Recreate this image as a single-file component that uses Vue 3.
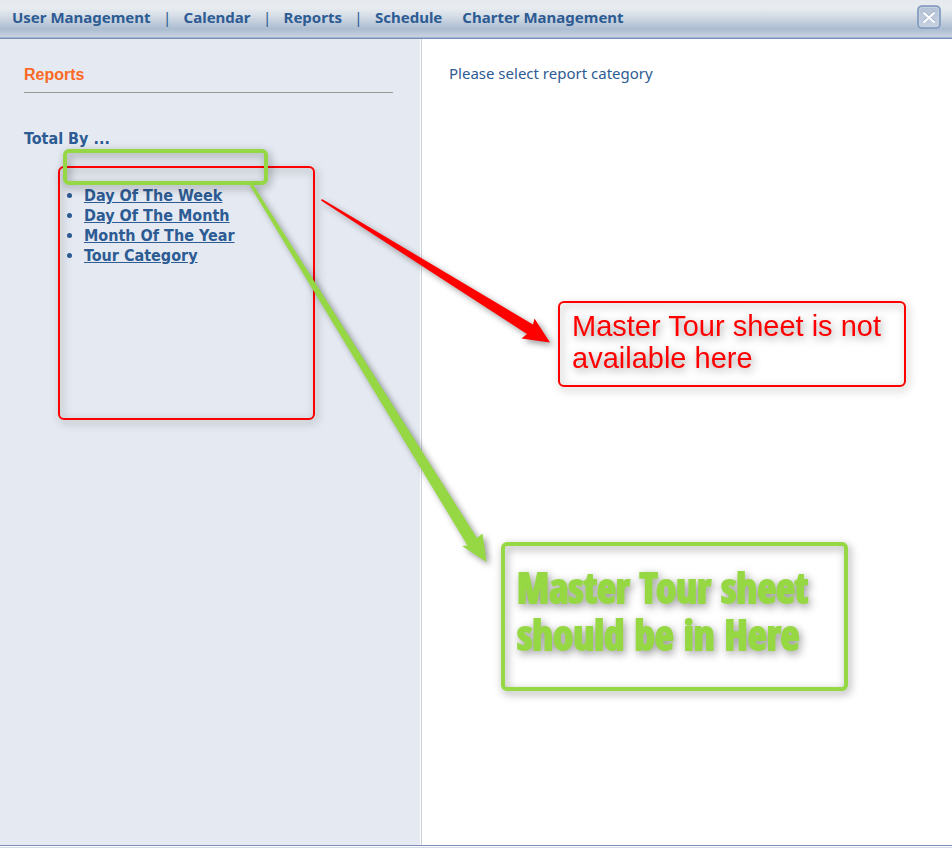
<script setup>
const menu = [
  { label: 'User Management', divided: true },
  { label: 'Calendar', divided: true },
  { label: 'Reports', divided: true },
  { label: 'Schedule', divided: false },
  { label: 'Charter Management', divided: false },
]
const categories = ['Day Of The Week', 'Day Of The Month', 'Month Of The Year', 'Tour Category']
</script>

<template>
  <div class="page">
    <header class="topbar">
      <nav class="menu" aria-label="Main">
        <template v-for="item in menu" :key="item.label">
          <a href="#" class="menu-link">{{ item.label }}</a>
          <span class="menu-gap">{{ item.divided ? '|' : '' }}</span>
        </template>
      </nav>
      <button class="close" type="button" aria-label="Close">
        <svg viewBox="0 0 24 24" width="24" height="24" aria-hidden="true">
          <defs>
            <linearGradient id="closeFill" x1="0" y1="0" x2="0" y2="1">
              <stop offset="0" stop-color="#b3c1d5" />
              <stop offset="1" stop-color="#c6d2e1" />
            </linearGradient>
          </defs>
          <rect x="1" y="1" width="22" height="22" rx="4" fill="url(#closeFill)" stroke="#7d97bc" stroke-width="1.6" />
          <rect x="2.5" y="2.5" width="19" height="19" rx="3" fill="none" stroke="#c6d2e2" />
          <path d="M6.500 6.500 L17.500 16.500 M17.500 6.500 L6.500 16.500" stroke="#98abc8" stroke-width="2" />
          <path d="M6.500 7.500 L17.500 17.500 M17.500 7.500 L6.500 17.500" stroke="#fff" stroke-width="2" />
        </svg>
      </button>
    </header>

    <main class="columns">
      <aside class="sidebar">
        <h1 class="title">Reports</h1>
        <h2 class="group">Total By ...</h2>
        <ul class="categories">
          <li v-for="name in categories" :key="name"><a href="#">{{ name }}</a></li>
        </ul>
      </aside>
      <section class="content">
        <p>Please select report category</p>
      </section>
    </main>
    <footer class="bottom"></footer>

    <div class="mark mark-list"></div>
    <div class="mark mark-slot"></div>
    <svg class="arrows" width="952" height="848" viewBox="0 0 952 848" aria-hidden="true">
      <path class="arrow" fill="#f00" d="M322 199 L533 324.5 L534.5 318.5 L550 342.5 L521.5 338.5 L527 334 L321 200.500 Z" />
      <path class="arrow" fill="#96d843" d="M252 183 L477 538 L482.500 533.500 L486.500 562 L462 546 L467.500 545.500 L249 184 Z" />
    </svg>
    <p class="mark note-red">Master Tour sheet is not<br />available here</p>
    <p class="mark note-green">Master Tour sheet<br />should be in Here</p>
  </div>
</template>

<style>
body {
  margin: 0;
}
</style>

<style scoped>
.page {
  position: relative;
  display: flex;
  flex-direction: column;
  min-height: 100vh;
  overflow: hidden;
  background: #fff;
  color: #2d5b93;
  font-family: Tahoma, "Noto Sans", sans-serif;
  font-size: 15px;
  line-height: 20px;
}
.topbar {
  box-sizing: border-box;
  height: 39px;
  display: flex;
  align-items: flex-start;
  justify-content: space-between;
  padding: 5px 11px 0 12px;
  border-bottom: 1px solid #7890b8;
  background: linear-gradient(#e6eaee 0, #e8ecf0 8px, #d5dde6 16px, #abbcd1 29px, #b7c5d7 32px, #c8d3e2 37px, #9fb1cc 37px);
}
.menu {
  display: flex;
  padding-top: 2px;
}
.menu-link {
  color: inherit;
  font-weight: bold;
  text-decoration: none;
}
.menu-gap {
  min-width: 20px;
  text-align: center;
}
.menu-gap:not(:empty) {
  min-width: 33px;
}
.close {
  display: flex;
  padding: 0;
  border: 0;
  background: none;
}
.columns {
  flex: 1;
  display: grid;
  grid-template-columns: 420px 1fr;
}
.sidebar {
  padding: 26px 27px 0 24px;
  background: #e5eaf2;
}
.title {
  margin: 0 0 36px;
  padding-bottom: 7px;
  border-bottom: 1px solid #999;
  color: #fa6925;
  font: bold 16px/20px "Liberation Sans", Arial, sans-serif;
}
.group,
.categories {
  font: bold 16px/20px Tahoma, "DejaVu Sans Condensed", sans-serif;
}
.group {
  margin: 0;
}
.categories {
  margin: 37px 0 0;
  padding-left: 60px;
}
.categories a {
  color: inherit;
}
.content {
  margin-left: 1px;
  padding: 24px 27px;
  border-left: 1px solid #c9d1dc;
}
.content p {
  margin: 0;
}
.bottom {
  height: 1px;
  border-top: 1px solid #7d90b3;
  border-bottom: 1px solid #d5dce8;
}
.mark {
  position: absolute;
  box-sizing: border-box;
  margin: 0;
  filter: drop-shadow(2px 3px 4px rgba(0, 0, 0, 0.4));
}
.mark-list {
  left: 58px;
  top: 166px;
  width: 257px;
  height: 254px;
  border: 2px solid #f00;
  border-radius: 6px;
}
.mark-slot {
  left: 63px;
  top: 149px;
  width: 205px;
  height: 36px;
  border: 4px solid #96d843;
  border-radius: 6px;
}
.arrows {
  position: absolute;
  left: 0;
  top: 0;
  pointer-events: none;
}
.arrow {
  filter: drop-shadow(3px 3px 3px rgba(0, 0, 0, 0.4));
}
.note-red {
  left: 558px;
  top: 301px;
  width: 348px;
  height: 86px;
  padding: 7px 12px;
  border: 2px solid #f00;
  border-radius: 6px;
  color: #f00;
  font: 29px/32px "Liberation Sans", Arial, sans-serif;
  white-space: nowrap;
}
.note-green {
  left: 501px;
  top: 542px;
  width: 347px;
  height: 149px;
  padding: 18px 12px;
  border: 4px solid #96d843;
  border-radius: 6px;
  color: #96d843;
  font: bold 41px/47px Impact, "Open Sans Condensed", "Roboto Condensed", sans-serif;
  -webkit-text-stroke: 2px #96d843;
  white-space: nowrap;
}
</style>
